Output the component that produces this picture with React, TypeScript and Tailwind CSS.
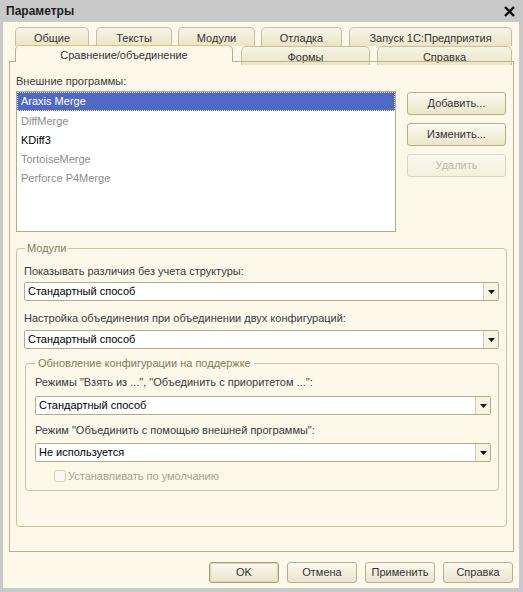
import React from 'react'

function Select({ value }: { value: string }) {
  return (
    <div className="flex h-[19px] rounded-[2px] border border-[#b5ac87] bg-white">
      <div className="flex-1 pl-[3px] text-[11px] leading-[17px] text-black">{value}</div>
      <div className="flex w-[15px] items-center justify-center border-l border-[#d3cbab] bg-[#f6f3e3]">
        <svg width="7" height="4" viewBox="0 0 7 4">
          <path d="M0 0h7L3.5 4z" fill="#111" />
        </svg>
      </div>
    </div>
  )
}

function Button({ label, disabled, primary, className }: { label: string; disabled?: boolean; primary?: boolean; className?: string }) {
  return (
    <div
      className={`flex items-center justify-center rounded-[3px] border bg-linear-to-b text-[11px] ${
        disabled
          ? 'border-[#ddd7bf] from-[#fbf9ef] to-[#f4f0de] text-[#bdb8a6]'
          : primary
            ? 'border-[#a59d78] from-[#fbf9ee] to-[#e9e3c9] text-[#333] shadow-[inset_0_0_0_1px_#ddd5b4]'
            : 'border-[#b7af8b] from-[#fcfaf0] to-[#ebe5cc] text-[#333]'
      } ${className ?? ''}`}
    >
      {label}
    </div>
  )
}

const tabBase =
  'h-[19px] shrink-0 rounded-t-[5px] border border-b-0 border-[#c9c09b] bg-linear-to-b from-[#f8f5e7] to-[#ebe4c7] pt-[3px] text-center text-[11px] leading-[14px] text-[#333]'

export default function App() {
  return (
    <div className="flex h-[592px] w-[523px] flex-col bg-[#c9c9c9] font-['Liberation_Sans',Arial,sans-serif]">
      {/* title bar */}
      <div className="flex h-[22px] shrink-0 items-center justify-between pl-[6px] pr-[8px]">
        <span className="text-[12px] font-bold text-[#1e1e1e]">Параметры</span>
        <svg width="11" height="11" viewBox="0 0 11 11">
          <path d="M1 1l9 9M10 1l-9 9" stroke="#111" strokeWidth="2.4" />
        </svg>
      </div>

      <div className="mb-[4px] ml-[3px] mr-[4px] flex flex-1 flex-col bg-[#fcf9ea]">
        {/* tabs */}
        <div className="flex pl-[12px] pt-[5px]">
          <div className={`${tabBase} w-[74px]`}>Общие</div>
          <div className={`${tabBase} ml-[7px] w-[76px]`}>Тексты</div>
          <div className={`${tabBase} ml-[6px] w-[77px]`}>Модули</div>
          <div className={`${tabBase} ml-[6px] w-[81px]`}>Отладка</div>
          <div className={`${tabBase} ml-[7px] w-[163px]`}>Запуск 1С:Предприятия</div>
        </div>
        <div className="-mt-[1px] flex h-[17px] pl-[12px]">
          <div className="relative z-10 h-[17px] w-[218px] rounded-t-[5px] border border-b-0 border-[#b9b08c] border-t-[#f2bd5c] bg-[#fcf9ea] pt-[2px] text-center text-[11px] leading-[14px] text-[#333]">
            Сравнение/объединение
          </div>
          <div className={`${tabBase} ml-[8px] mt-px h-[16px] pt-[1px] w-[129px]`}>Формы</div>
          <div className={`${tabBase} ml-[7px] mt-px h-[16px] pt-[1px] w-[135px]`}>Справка</div>
        </div>

        {/* page */}
        <div className="-mt-px ml-[6px] mr-[5px] flex flex-1 flex-col border border-[#b9b08c] px-[6px]">
          <div className="mt-[12px] h-[14px] text-[11px] leading-[14px] text-[#3a3a3a]">Внешние программы:</div>
          <div className="mt-[3px] flex">
            <div className="h-[141px] w-[380px] border border-[#b5ac87] bg-white text-[11px]">
              <div className="h-[19px] border border-dotted border-[#dfe4f5] bg-[#4f69c4] pl-[3px] leading-[17px] text-white">
                Araxis Merge
              </div>
              <div className="h-[19px] pl-[4px] leading-[20px] text-[#8d8d8d]">DiffMerge</div>
              <div className="h-[19px] pl-[4px] leading-[20px] text-black">KDiff3</div>
              <div className="h-[19px] pl-[4px] leading-[20px] text-[#8d8d8d]">TortoiseMerge</div>
              <div className="h-[19px] pl-[4px] leading-[20px] text-[#8d8d8d]">Perforce P4Merge</div>
            </div>
            <div className="ml-[11px] mt-px flex w-[99px] flex-col gap-[8px]">
              <Button label="Добавить..." className="h-[23px]" />
              <Button label="Изменить..." className="h-[23px]" />
              <Button label="Удалить" disabled className="h-[23px]" />
            </div>
          </div>

          <fieldset className="mt-[9px] rounded-[4px] border border-[#c9c1a0] px-[7px] pb-[35px]">
            <legend className="ml-px px-[2px] text-[11px] leading-[14px] text-[#847b5f]">Модули</legend>
            <div className="mt-[9px] text-[11px] leading-[14px] text-[#3a3a3a]">
              Показывать различия без учета структуры:
            </div>
            <div className="mt-[4px]">
              <Select value="Стандартный способ" />
            </div>
            <div className="mt-[10px] text-[11px] leading-[14px] text-[#3a3a3a]">
              Настройка объединения при объединении двух конфигураций:
            </div>
            <div className="mt-[5px]">
              <Select value="Стандартный способ" />
            </div>

            <fieldset className="ml-px mt-[7px] rounded-[4px] border border-[#c9c1a0] pb-[7px] pl-[9px] pr-[7px]">
              <legend className="px-[3px] text-[11px] leading-[14px] text-[#847b5f]">
                Обновление конфигурации на поддержке
              </legend>
              <div className="mt-[5px] text-[11px] leading-[14px] text-[#3a3a3a]">
                Режимы "Взять из ...", "Объединить с приоритетом ...":
              </div>
              <div className="mt-[7px]">
                <Select value="Стандартный способ" />
              </div>
              <div className="mt-[8px] text-[11px] leading-[14px] text-[#3a3a3a]">
                Режим "Объединить с помощью внешней программы":
              </div>
              <div className="mt-[6px]">
                <Select value="Не используется" />
              </div>
              <div className="ml-[19px] mt-[7px] flex h-[14px] items-center">
                <div className="h-[12px] w-[12px] rounded-[2px] border border-[#d6cfb3] bg-[#fbf9ef]" />
                <span className="ml-[2px] text-[11px] leading-[14px] text-[#a5a192]">Устанавливать по умолчанию</span>
              </div>
            </fieldset>
          </fieldset>
        </div>

        {/* bottom buttons */}
        <div className="mb-[5px] mt-[10px] flex h-[21px] justify-end gap-[8px] pr-[6px]">
          <Button label="OK" primary className="w-[70px]" />
          <Button label="Отмена" className="w-[70px]" />
          <Button label="Применить" className="w-[70px]" />
          <Button label="Справка" className="w-[70px]" />
        </div>
      </div>
    </div>
  )
}
